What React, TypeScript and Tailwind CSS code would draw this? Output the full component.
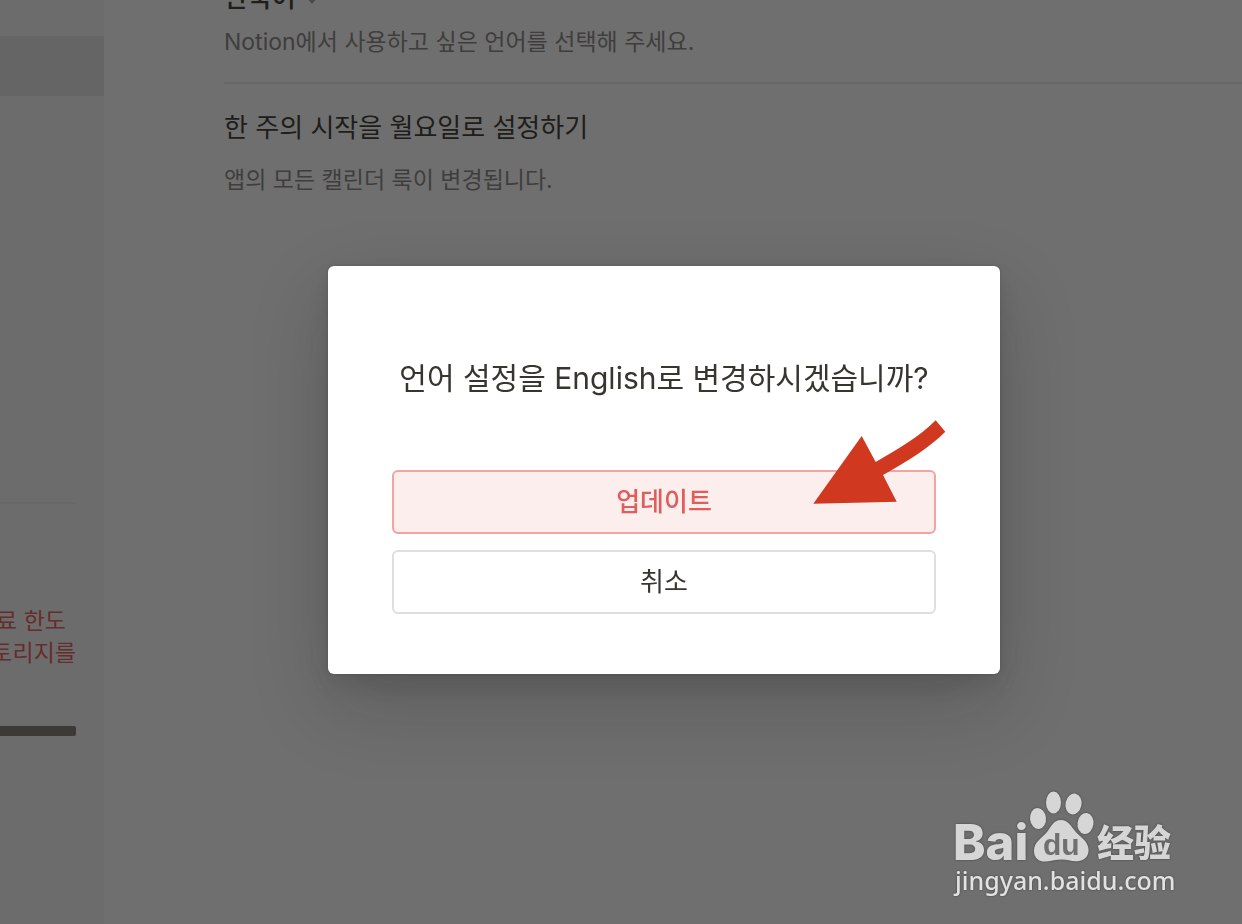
import React, { useState } from 'react';

function Sidebar() {
  return (
    <aside className="w-[104px] shrink-0 overflow-hidden bg-[#f7f7f7] pt-9">
      <div className="h-[60px] bg-[#e6e6e6]" />
      <hr className="mt-[406px] mr-7 border-t-2 border-[#ebebeb]" />
      <div className="mt-[101px] mr-7 flex flex-col items-end text-[23px] leading-8 whitespace-nowrap text-[#eb5757]">
        <span className="pr-2.5">료 한도</span>
        <span>토리지를</span>
      </div>
      <div className="mt-[57px] mr-7 h-[10px] rounded-r-xs bg-[#7d7a72]" />
    </aside>
  );
}

function Settings() {
  return (
    <main className="-mt-[18px] min-w-0 flex-1 pl-[120px]">
      <section>
        <button type="button" className="flex items-end gap-2.5 text-[26px] leading-8 font-medium text-[#37352f]">
          한국어
          <svg viewBox="0 0 30 30" className="mb-2 h-3 w-3 fill-[#a5a4a0]">
            <path d="M15 25 28 10 23 5 15 14 7 5 2 10Z" />
          </svg>
        </button>
        <p className="mt-3 text-[23px] leading-8 text-[#878682]">
          Notion에서 사용하고 싶은 언어를 선택해 주세요.
        </p>
      </section>
      <hr className="mt-6 border-t-2 border-[#ebebea]" />
      <section>
        <h2 className="mt-7 text-[26px] leading-8 text-[#37352f]">
          한 주의 시작을 월요일로 설정하기
        </h2>
        <p className="mt-5 text-[23px] leading-8 text-[#878682]">
          앱의 모든 캘린더 룩이 변경됩니다.
        </p>
      </section>
    </main>
  );
}

function Arrow() {
  return (
    <svg
      viewBox="0 0 144 92"
      className="pointer-events-none absolute top-[150px] left-[480px] h-[92px] w-[144px] fill-[#d03820]"
      aria-hidden="true"
    >
      <path d="M5.3 87.8 53.7 20 67.7 46C92 32 112 20 127.7 4.3L137.3 15.7C122 31 100 45 75 59L88.7 85.7Z" />
    </svg>
  );
}

function ConfirmDialog({ onClose }: { onClose: () => void }) {
  return (
    <div className="fixed inset-0 flex items-center justify-center bg-[rgba(15,15,15,0.6)] pt-4 pl-[86px]">
      <div
        role="dialog"
        aria-labelledby="confirm-title"
        className="relative w-full max-w-[672px] rounded-md bg-white px-16 pt-[92px] pb-[60px] shadow-[0_0_0_2px_rgba(15,15,15,0.05),0_10px_20px_rgba(15,15,15,0.1),0_30px_80px_rgba(15,15,15,0.2)]"
      >
        <h1
          id="confirm-title"
          className="mb-[72px] text-center text-[30px] leading-10 whitespace-nowrap text-[#37352f]"
        >
          언어 설정을 English로 변경하시겠습니까?
        </h1>
        <div className="flex flex-col gap-4">
          <button
            type="button"
            onClick={onClose}
            className="h-16 rounded-md border-2 border-[#f0a5a3] bg-[#fbeeed] text-[26px] leading-8 font-medium text-[#df5d5b]"
          >
            업데이트
          </button>
          <button
            type="button"
            onClick={onClose}
            className="h-16 rounded-md border-2 border-[#dfdfde] bg-white text-[26px] leading-8 text-[#37352f]"
          >
            취소
          </button>
        </div>
        <Arrow />
      </div>
    </div>
  );
}

function Watermark() {
  return (
    <svg
      viewBox="0 0 240 120"
      className="pointer-events-none fixed right-[58px] bottom-5 h-[120px] w-[240px] fill-[#d6d6d6] drop-shadow-[0_0_1px_rgba(40,40,40,0.6)]"
    >
      <text x="9" y="76" className="font-['Inter'] text-[49px] font-extrabold">Bai</text>
      <ellipse cx="94" cy="34.5" rx="8" ry="10.5" transform="rotate(-6 94 34.5)" />
      <ellipse cx="109.5" cy="18.5" rx="7.5" ry="11" />
      <ellipse cx="129.5" cy="20" rx="8" ry="10.5" transform="rotate(12 129.5 20)" />
      <ellipse cx="141.5" cy="39.5" rx="8" ry="10.5" transform="rotate(8 141.5 39.5)" />
      <path d="M117 36C109 36 107 43 103 48C98 54 90 58 90 67C90 75 96 78 102 77.5C108 77 112 75.5 118 75.5C124 75.5 128 78 135 77C141 76 145 72 144.500 65C144 57 136 53 131 47C127 42 124 36 117 36Z" />
      <text x="99" y="71" className="fill-[#707070] font-['Liberation_Sans'] text-[30px] font-bold">du</text>
      <text x="153" y="73" className="font-['Noto_Sans_CJK_SC'] text-[37px] font-black">经验</text>
      <text x="11" y="106" className="fill-[#e2e2e2] font-['Noto_Sans'] text-[25px] font-medium">jingyan.baidu.com</text>
    </svg>
  );
}

function App() {
  const [open, setOpen] = useState(true);

  return (
    <div className="flex min-h-screen overflow-hidden bg-white font-['Inter','Noto_Sans_CJK_KR',sans-serif]">
      <Sidebar />
      <Settings />
      {open && <ConfirmDialog onClose={() => setOpen(false)} />}
      <Watermark />
    </div>
  );
}

export default App;
